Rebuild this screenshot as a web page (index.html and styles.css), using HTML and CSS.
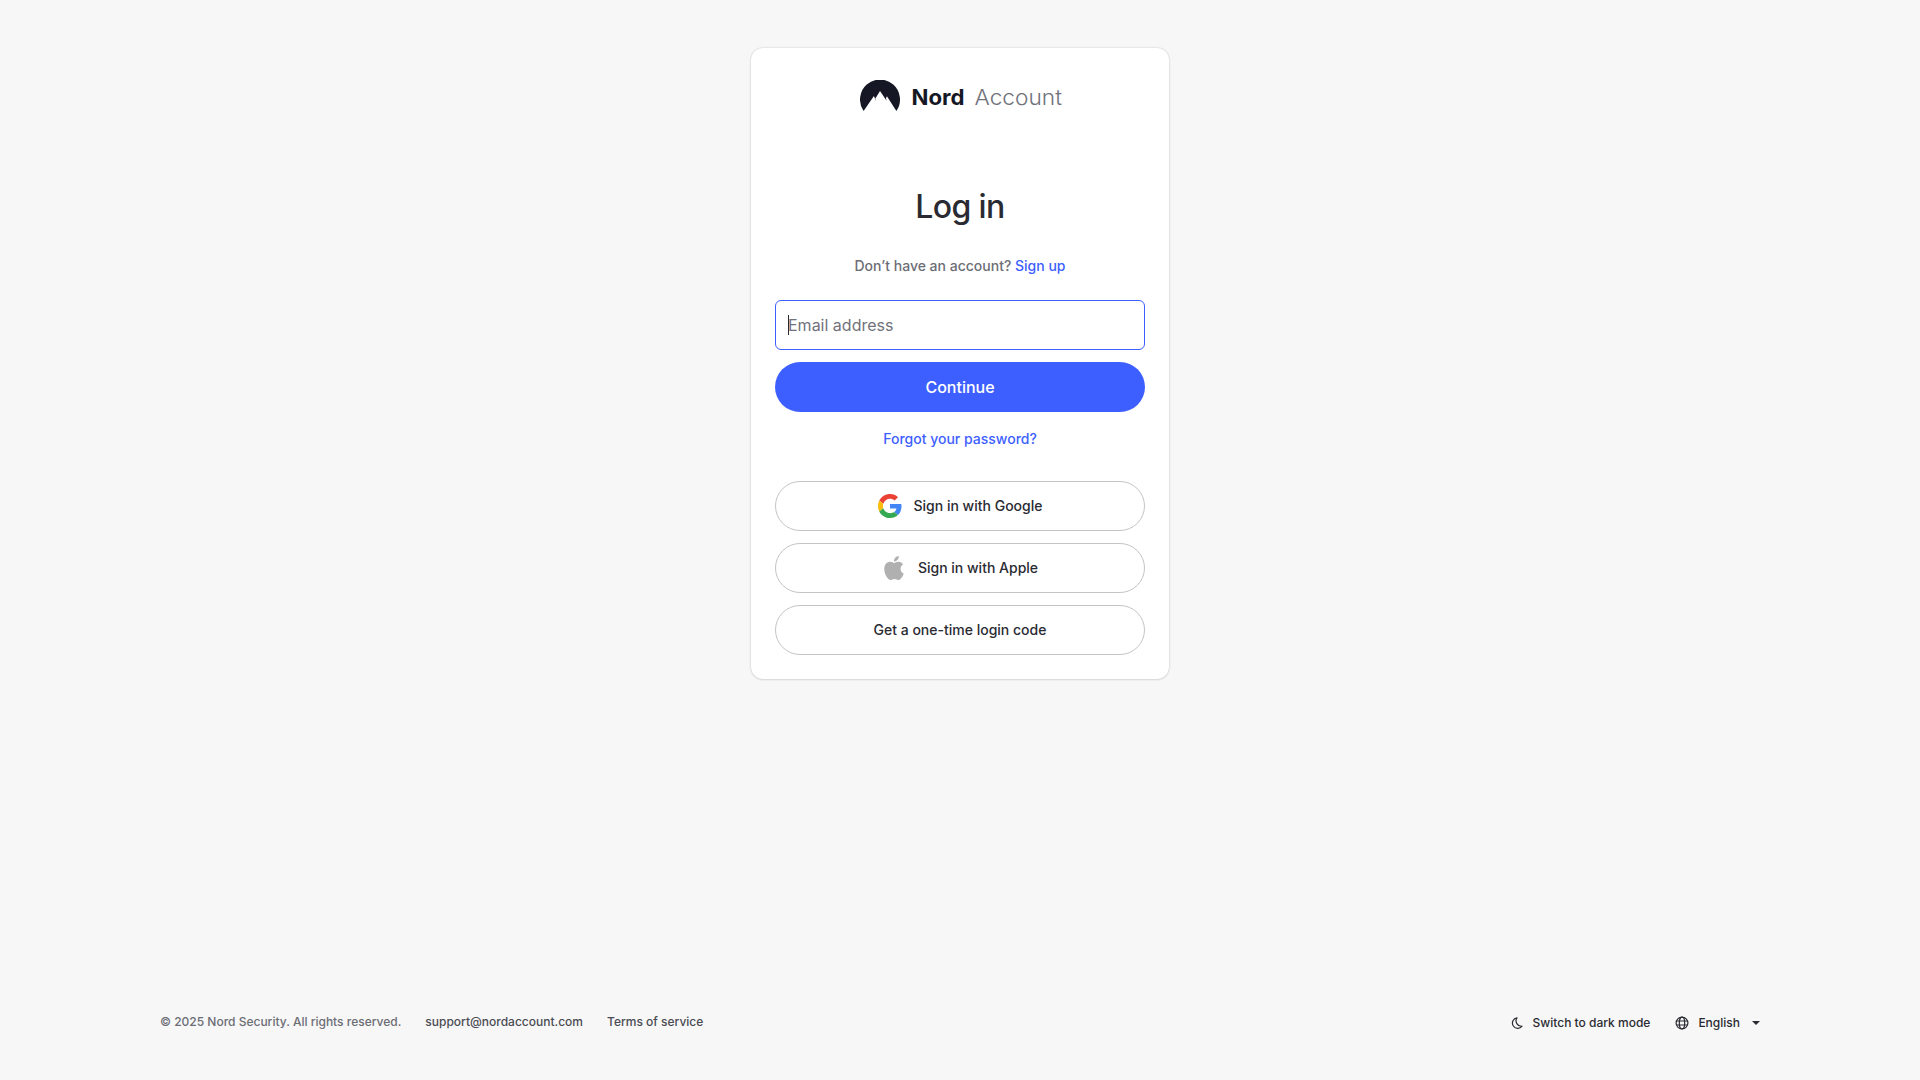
FILE: index.html
```html
<!DOCTYPE html>
<html lang="en">
<head>
<meta charset="utf-8">
<title>Nord Account</title>
<link rel="stylesheet" href="styles.css">
</head>
<body>
<main class="main">
  <section class="card">
    <svg class="logo" width="204" height="32" viewBox="0 0 204 32" role="img" aria-label="Nord Account">
      <path fill="#151824" d="M3.600 31A20 20 0 1 1 36.400 31L26.900 16.300L26 18.200L26.600 20.800L20 11L14.900 19.200L16.100 21L13.900 16.100Z"/>
      <text class="logo-nord" x="51.500" y="25" textLength="53" lengthAdjust="spacingAndGlyphs">Nord</text>
      <text class="logo-account" x="114.500" y="25" textLength="87.500" lengthAdjust="spacingAndGlyphs">Account</text>
    </svg>
    <h1 class="title">Log in</h1>
    <p class="signup">Don’t have an account? <a class="link">Sign up</a></p>
    <div class="field"><span class="caret"></span><span class="placeholder">Email address</span></div>
    <button class="button primary">Continue</button>
    <a class="link forgot">Forgot your password?</a>
    <button class="button">
      <svg width="24" height="24" viewBox="0 0 48 48">
        <path fill="#EA4335" d="M24 9.500c3.540 0 6.710 1.220 9.210 3.600l6.850-6.850C35.900 2.380 30.470 0 24 0 14.620 0 6.510 5.380 2.560 13.220l7.980 6.190C12.430 13.720 17.740 9.500 24 9.500z"/>
        <path fill="#4285F4" d="M46.980 24.550c0-1.570-.15-3.090-.38-4.550H24v9.020h12.940c-.58 2.960-2.260 5.480-4.780 7.180l7.730 6c4.510-4.180 7.090-10.360 7.090-17.650z"/>
        <path fill="#FBBC05" d="M10.530 28.590c-.48-1.450-.76-2.990-.76-4.590s.27-3.140.76-4.590l-7.980-6.190C.92 16.460 0 20.120 0 24c0 3.880.92 7.540 2.560 10.780l7.970-6.190z"/>
        <path fill="#34A853" d="M24 48c6.480 0 11.930-2.130 15.890-5.810l-7.730-6c-2.150 1.450-4.920 2.300-8.160 2.300-6.260 0-11.570-4.220-13.470-9.910l-7.980 6.190C6.510 42.620 14.620 48 24 48z"/>
      </svg>
      <span class="label">Sign in with Google</span>
    </button>
    <button class="button">
      <svg width="24" height="24" viewBox="0 0 24 24">
        <path fill="#b0b0b0" d="M12.152 6.896c-.948 0-2.415-1.078-3.960-1.040-2.040.027-3.910 1.183-4.961 3.014-2.117 3.675-.546 9.103 1.519 12.090 1.013 1.454 2.208 3.090 3.792 3.039 1.520-.065 2.090-.987 3.935-.987 1.831 0 2.350.987 3.960.948 1.637-.026 2.676-1.480 3.676-2.948 1.156-1.688 1.636-3.325 1.662-3.415-.039-.013-3.182-1.221-3.220-4.857-.026-3.040 2.480-4.494 2.597-4.559-1.429-2.090-3.623-2.324-4.390-2.376-2-.156-3.675 1.090-4.610 1.090zM15.530 3.830c.843-1.012 1.400-2.427 1.245-3.830-1.207.052-2.662.805-3.532 1.818-.780.896-1.454 2.338-1.273 3.714 1.338.104 2.715-.688 3.559-1.701"/>
      </svg>
      <span class="label">Sign in with Apple</span>
    </button>
    <button class="button"><span class="label">Get a one-time login code</span></button>
  </section>
</main>
<footer class="footer">
  <div class="footer-links">
    <span class="copyright">© 2025 Nord Security. All rights reserved.</span>
    <a>support@nordaccount.com</a>
    <a>Terms of service</a>
  </div>
  <div class="footer-actions">
    <span class="action">
      <svg width="12" height="12" viewBox="0 0 12 12" fill="none" stroke="#2a2b32" stroke-width="1.200" stroke-linejoin="round">
        <path d="M6 .8A5.300 5.300 0 1 0 11 9.200A5.400 5.400 0 0 1 6 .8Z"/>
      </svg>
      Switch to dark mode
    </span>
    <span class="action language">
      <svg width="14" height="14" viewBox="0 0 14 14" fill="none" stroke="#2a2b32" stroke-width="1.200">
        <circle cx="7" cy="7" r="5.900"/><ellipse cx="7" cy="7" rx="2.700" ry="5.900"/><path d="M1.500 5H12.500M1.500 9H12.500"/>
      </svg>
      English
      <svg class="chevron" width="8" height="4" viewBox="0 0 8 4"><path fill="#2a2b32" d="M0 0H8L4 4Z"/></svg>
    </span>
  </div>
</footer>
</body>
</html>
```
FILE: styles.css
```css
* { box-sizing: border-box; }
body {
  margin: 0;
  height: 1080px;
  display: flex;
  flex-direction: column;
  background: #f7f7f7;
  color: #2a2b32;
  font-family: Inter, sans-serif;
}
.main { flex: 1; padding-top: 48px; }
.card {
  width: 418px;
  height: 631px;
  margin: 0 auto;
  padding: 32px 24px 24px;
  display: flex;
  flex-direction: column;
  align-items: center;
  background: #fff;
  border-radius: 12px;
  box-shadow: 0 0 2px rgba(0, 0, 0, .22), 0 1px 2px rgba(0, 0, 0, .08);
}
.logo { flex: none; margin-left: 4px; }
.logo-nord { font: 700 21.5px Inter, sans-serif; fill: #151824; }
.logo-account { font: 300 21.5px Inter, sans-serif; fill: #71727c; }
.title { margin: 75px 0 0; font-size: 32px; line-height: 40px; font-weight: 500; letter-spacing: -.02em; }
.signup { margin: 29px 0 0; font-size: 14px; line-height: 20px; font-weight: 500; color: #6c6d75; }
.link { color: #3e5fff; }
.field {
  position: relative;
  width: 100%;
  height: 50px;
  margin-top: 24px;
  padding: 0 12px;
  display: flex;
  align-items: center;
  border: 1px solid #3e5fff;
  border-radius: 6px;
  font-size: 16px;
  color: #71727c;
}
.caret { position: absolute; left: 12px; top: 14px; width: 1px; height: 20px; background: #2a2b32; }
.button {
  width: 100%;
  height: 50px;
  flex: none;
  margin: 12px 0 0;
  padding: 0;
  display: flex;
  align-items: center;
  justify-content: center;
  gap: 12px;
  border: 1px solid #c4c4c6;
  border-radius: 25px;
  background: #fff;
  color: #2a2b32;
  font: 500 14px Inter, sans-serif;
}
.label { line-height: 20px; padding-bottom: 1px; }
.primary { border: 0; background: #3e5fff; color: #fff; font-size: 16px; }
.forgot { margin: 17px 0 20px; font-size: 14px; line-height: 20px; font-weight: 500; }
.footer {
  height: 116px;
  padding: 48px 160px 0;
  display: flex;
  justify-content: space-between;
  font-size: 12px;
  line-height: 20px;
  font-weight: 500;
}
.footer-links { display: flex; gap: 24px; color: #4a4b53; }
.copyright { color: #6c6d75; }
.footer-actions { display: flex; gap: 25px; padding-top: 1px; }
.action { height: 20px; display: flex; align-items: center; gap: 10px; }
.language { gap: 9px; }
.chevron { margin-left: 3px; }
```
